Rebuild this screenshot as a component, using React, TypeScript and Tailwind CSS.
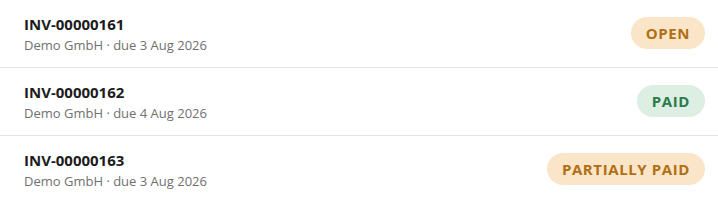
const invoices = [
  { id: 'INV-00000161', customer: 'Demo GmbH', due: '3 Aug 2026', status: 'open' },
  { id: 'INV-00000162', customer: 'Demo GmbH', due: '4 Aug 2026', status: 'paid' },
  { id: 'INV-00000163', customer: 'Demo GmbH', due: '3 Aug 2026', status: 'partial' },
] as const

type Status = (typeof invoices)[number]['status']

const badgeStyles: Record<Status, { label: string; className: string }> = {
  open: { label: 'Open', className: 'bg-[#fbe5c8] text-[#b06f14]' },
  paid: { label: 'Paid', className: 'bg-[#dcefe2] text-[#2e7a4c]' },
  partial: { label: 'Partially paid', className: 'bg-[#fbe5c8] text-[#b06f14]' },
}

function StatusBadge({ status }: { status: Status }) {
  const badge = badgeStyles[status]
  return (
    <span
      className={`rounded-full px-[15px] py-1.5 text-[15px] leading-[21px] font-bold uppercase tracking-[0.04em] ${badge.className}`}
    >
      {badge.label}
    </span>
  )
}

export default function App() {
  return (
    <div
      className="w-[718px] bg-white"
      style={{ fontFamily: '"Open Sans", "Noto Sans", sans-serif' }}
    >
      <ul className="divide-y divide-[#e4e4e4]">
        {invoices.map((inv) => (
          <li key={inv.id} className="flex items-center justify-between pl-6 pr-[13px] pt-[14px] pb-[13px]">
            <div className="flex flex-col">
              <span className="text-[15px] leading-5 font-bold text-[#1c1c1c]">{inv.id}</span>
              <span className="mt-0.5 text-[13px] leading-[18px] text-[#707070]">
                {inv.customer} · due {inv.due}
              </span>
            </div>
            <div className="-mt-[2px]">
              <StatusBadge status={inv.status} />
            </div>
          </li>
        ))}
      </ul>
    </div>
  )
}
